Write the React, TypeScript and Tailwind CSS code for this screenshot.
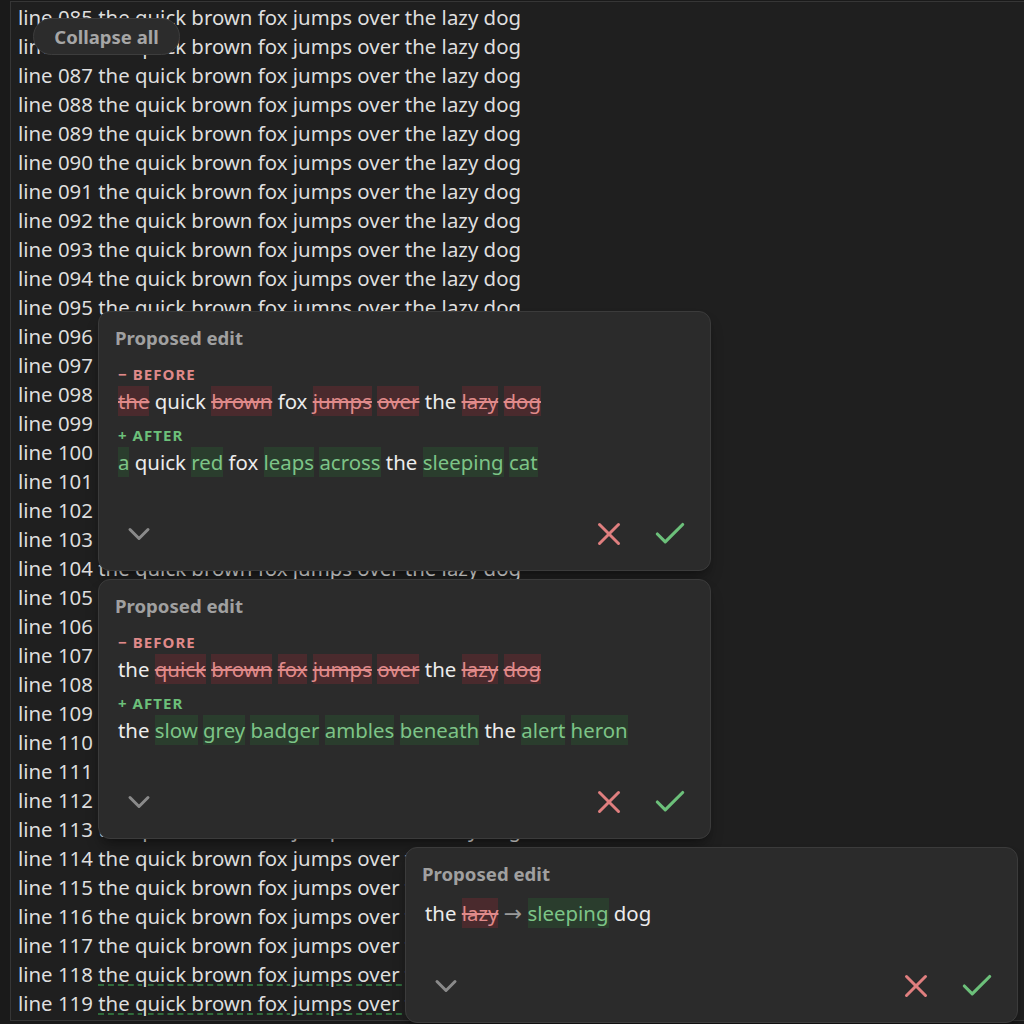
import { Check, ChevronDown, X } from 'lucide-react';
import clsx from 'clsx';
import { Fragment } from 'react';

type Tok = { t: string; k?: 'del' | 'add' };

const FONT = { fontFamily: '"Noto Sans", "Open Sans", sans-serif' };

const parse = (src: string): Tok[] =>
  src.split(' ').map((w) => {
    if (w.startsWith('-')) return { t: w.slice(1), k: 'del' };
    if (w.startsWith('+')) return { t: w.slice(1), k: 'add' };
    return { t: w };
  });

const EDITS = [
  {
    top: 'top-[309px]',
    left: 'left-[87px]',
    before: parse('-the quick -brown fox -jumps -over the -lazy -dog'),
    after: parse('+a quick +red fox +leaps +across the +sleeping +cat'),
  },
  {
    top: 'top-[577px]',
    left: 'left-[87px]',
    before: parse('the -quick -brown -fox -jumps -over the -lazy -dog'),
    after: parse('the +slow +grey +badger +ambles +beneath the +alert +heron'),
  },
];

const LINES = Array.from({ length: 35 }, (_, i) => 85 + i);

// ---------- pieces ----------

const Word = ({ tok }: { tok: Tok }) => (
  <span
    className={clsx(
      'inline-block leading-[30px]',
      tok.k === 'del' &&
        'bg-[#4a2a2d] text-[#e08a8a] line-through decoration-[#e08a8a]',
      tok.k === 'add' && 'bg-[#2a3d2d] text-[#7dc487]',
      !tok.k && 'text-[#ececec]',
    )}
  >
    {tok.t}
  </span>
);

const TokenLine = ({ toks }: { toks: Tok[] }) => (
  <div className="whitespace-pre text-[20.4px] leading-[30px]">
    {toks.map((tok, i) => (
      <Fragment key={tok.t + i}>
        {i > 0 && ' '}
        <Word tok={tok} />
      </Fragment>
    ))}
  </div>
);

const CardFooter = () => (
  <div className="mt-[37px] flex items-center justify-between px-[20px]">
    <button className="flex h-10 w-10 items-center justify-center text-[#8a8a8a]">
      <ChevronDown size={36} strokeWidth={2} />
    </button>
    <div className="flex items-center gap-[21px]">
      <button className="flex h-10 w-10 items-center justify-center text-[#e07f7f]">
        <X size={38} strokeWidth={1.9} />
      </button>
      <button className="flex h-10 w-10 items-center justify-center text-[#6cc07a]">
        <Check size={38} strokeWidth={2} />
      </button>
    </div>
  </div>
);

const CardShell = ({
  className,
  children,
}: {
  className: string;
  children: React.ReactNode;
}) => (
  <div
    className={clsx(
      'absolute w-[613px] rounded-xl border border-[#3b3b3b] bg-[#2b2b2b] pt-[14px] pb-[16px] shadow-lg shadow-black/30',
      className,
    )}
  >
    <div className="px-[16px] text-[18.6px] font-bold leading-[24px] text-[#a0a0a0]">
      Proposed edit
    </div>
    {children}
    <CardFooter />
  </div>
);

const DiffCard = ({
  top,
  left,
  before,
  after,
}: (typeof EDITS)[number]) => (
  <CardShell className={clsx(top, left)}>
    <div className="mt-3 px-[19px]">
      <div className="text-[15px] font-bold leading-[24px] tracking-[0.07em] text-[#e08a8a]">
        − BEFORE
      </div>
      <TokenLine toks={before} />
      <div className="mt-[7px] text-[15px] font-bold leading-[24px] tracking-[0.07em] text-[#6cc07a]">
        + AFTER
      </div>
      <TokenLine toks={after} />
    </div>
  </CardShell>
);

const InlineCard = () => (
  <CardShell className="top-[845px] left-[394px]">
    <div className="mt-3 px-[19px]">
      <div className="whitespace-pre text-[20.4px] leading-[30px]">
        <Word tok={{ t: 'the' }} /> <Word tok={{ t: 'lazy', k: 'del' }} />{' '}
        <span
          className="text-[22px] text-[#9a9a9a]"
          style={{ fontFamily: '"DejaVu Sans", sans-serif' }}
        >
          →
        </span>{' '}
        <Word tok={{ t: 'sleeping', k: 'add' }} /> <Word tok={{ t: 'dog' }} />
      </div>
    </div>
  </CardShell>
);

export default function App() {
  return (
    <div className="h-[1024px] w-[1024px] overflow-hidden bg-[#1a1a1a] pt-px pl-[10px]" style={FONT}>
      <div className="relative h-[1020px] border-t border-b border-l border-[#363636] bg-[#1f1f1f] pl-[7px]">
        <div className="pt-px">
          {LINES.map((n) => {
            const num = String(n).padStart(3, '0');
            const marked = n >= 118;
            return (
              <div
                key={n}
                className="whitespace-pre text-[20.4px] leading-[29px] text-[#dedede]"
              >
                {`line ${num} `}
                <span
                  className={clsx(
                    marked &&
                      'underline decoration-[#2f6b3b] decoration-dashed underline-offset-[2px]',
                  )}
                >
                  the quick brown fox jumps over the lazy dog
                </span>
              </div>
            );
          })}
        </div>

        <button className="absolute top-[16px] left-[22px] flex h-[37px] w-[147px] items-center justify-center rounded-full border border-[#3d3d3d] bg-[#2c2c2c] text-[18.5px] font-bold text-[#a6a6a6]">
          Collapse all
        </button>

        {EDITS.map((edit) => (
          <DiffCard key={edit.top} {...edit} />
        ))}
        <InlineCard />
      </div>
    </div>
  );
}
